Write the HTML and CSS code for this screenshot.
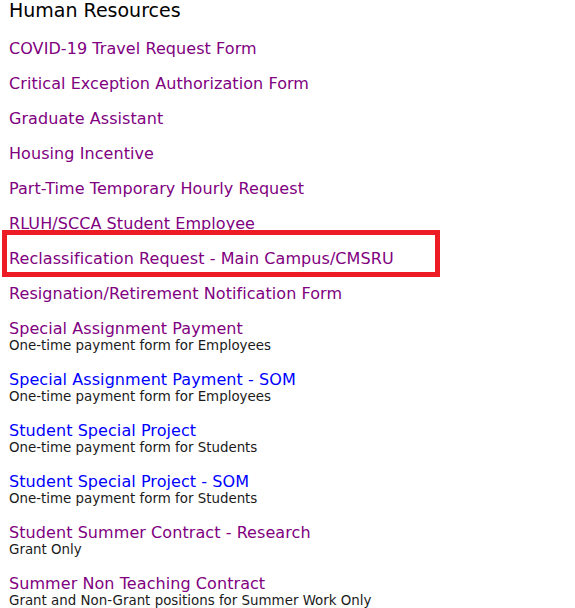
FILE: index.html
```html
<!DOCTYPE html>
<html>
<head>
<meta charset="utf-8">
<link rel="stylesheet" href="styles.css">
</head>
<body>
<h2 class="heading">Human Resources</h2>
<ul class="forms">
  <li class="item"><a class="link visited" href="#">COVID-19 Travel Request Form</a></li>
  <li class="item"><a class="link visited" href="#">Critical Exception Authorization Form</a></li>
  <li class="item"><a class="link visited" href="#">Graduate Assistant</a></li>
  <li class="item"><a class="link visited" href="#">Housing Incentive</a></li>
  <li class="item"><a class="link visited" href="#">Part-Time Temporary Hourly Request</a></li>
  <li class="item"><a class="link visited" href="#">RLUH/SCCA Student Employee</a></li>
  <li class="item highlighted"><a class="link visited" href="#">Reclassification Request - Main Campus/CMSRU</a></li>
  <li class="item"><a class="link visited" href="#">Resignation/Retirement Notification Form</a></li>
  <li class="item"><a class="link visited" href="#">Special Assignment Payment</a><div class="desc">One-time payment form for Employees</div></li>
  <li class="item"><a class="link" href="#">Special Assignment Payment - SOM</a><div class="desc">One-time payment form for Employees</div></li>
  <li class="item"><a class="link" href="#">Student Special Project</a><div class="desc">One-time payment form for Students</div></li>
  <li class="item"><a class="link" href="#">Student Special Project - SOM</a><div class="desc">One-time payment form for Students</div></li>
  <li class="item"><a class="link visited" href="#">Student Summer Contract - Research</a><div class="desc">Grant Only</div></li>
  <li class="item"><a class="link visited" href="#">Summer Non Teaching Contract</a><div class="desc">Grant and Non-Grant positions for Summer Work Only</div></li>
</ul>
</body>
</html>
```
FILE: styles.css
```css
html, body {
  margin: 0;
  padding: 0;
  background: #fff;
}
body {
  font-family: "DejaVu Sans", Verdana, sans-serif;
  color: #000;
  padding-left: 9px;
}
.heading {
  font-size: 19px;
  font-weight: normal;
  line-height: 24px;
  margin: -2px 0 17px 0;
}
.forms {
  list-style: none;
  margin: 0;
  padding: 0;
}
.item {
  margin-bottom: 16px;
  position: relative;
}
.link {
  display: block;
  font-size: 16px;
  line-height: 19px;
  letter-spacing: 0.07px;
  text-decoration: none;
  color: #0000ff;
}
.link.visited {
  color: #800080;
}
.desc {
  font-size: 13.4px;
  line-height: 16px;
  color: #1a1a1a;
}
.highlighted::after {
  content: "";
  position: absolute;
  left: -7px;
  top: -19px;
  width: 428px;
  height: 37px;
  border: 5px solid #ed1c24;
}
```
